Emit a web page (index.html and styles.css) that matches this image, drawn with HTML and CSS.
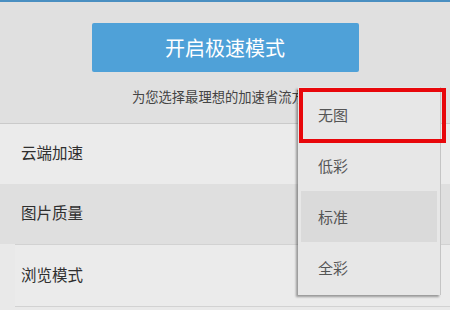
FILE: index.html
```html
<!DOCTYPE html>
<html><head>
  <meta charset="utf-8">
  <title>极速模式</title>
<link rel="stylesheet" href="styles.css">
</head>
<body>
<div id="topline"></div>
<div id="head">
 <button id="turbo">开启极速模式</button>
 <p class="tip">为您选择最理想的加速省流方案</p>
</div><!-- head -->
<div id="list">
 <div class="row">云端加速</div>
 <div class="row active">图片质量</div>
 <div class="row last">浏览模式</div>
</div><!-- list -->

<div id="menu">
 <div class="item">无图</div>
 <div class="item">低彩</div>
 <div class="item sel">标准</div>
 <div class="item">全彩</div>
</div><!-- menu -->
<div id="mark"></div>
</body></html>
```

FILE: styles.css
```css
html, body{
  margin: 0;
  padding: 0;
}
body{
  width: 450px;
  height: 310px;
  overflow: hidden;
  position: relative;
  background-color: #e9e9e9;
  font-family: "Noto Sans CJK SC", sans-serif;
  color: #333;
}
div#topline{
  height: 2px;
  background-color: #4a8fc1;
}
div#head{
  height: 121px;
  background-color: #e0e0e0;
  border-bottom: solid 1px #cacaca;
  display: flex;
  flex-direction: column;
  align-items: center;
}
button#turbo{
  margin-top: 21px;
  width: 267px;
  height: 49px;
  border: none;
  border-radius: 2px;
  background-color: #4fa1d8;
  color: #fff;
  font-family: inherit;
  font-size: 20px;
  padding: 0;
}
p.tip{
  margin: 16px 0 0 0;
  font-size: 13.3px;
  line-height: 18px;
  color: #444;
}
div.row{
  height: 56px;
  padding-left: 21px;
  padding-bottom: 4px;
  display: flex;
  align-items: center;
  font-size: 15.5px;
  color: #2f2f2f;
  background-color: #ebebeb;
}
div.row.active{
  background-color: #dfdfdf;
}
div.row.last{
  height: 57px;
  border-top: solid 1px #d2d2d2;
  border-bottom: solid 1px #d2d2d2;
  margin-left: 15px;
  padding-left: 6px;
}

/* popup menu */
div#menu{
  position: absolute;
  left: 298px;
  top: 87px;
  width: 142px;
  padding: 2px 0;
  background-color: #e7e7e7;
  box-shadow: -2px 2px 2px rgba(0,0,0,0.35);
  border-right: solid 1px #c4c4c4;
}
div.item{
  height: 51px;
  margin: 0 3px;
  padding-left: 17px;
  display: flex;
  align-items: center;
  font-size: 15px;
  color: #555;
}
div.item.sel{
  background-color: #dadada;
}
div#mark{
  position: absolute;
  left: 299px;
  top: 88px;
  width: 139px;
  height: 47px;
  border: solid 4px #e8070b;
}
```
